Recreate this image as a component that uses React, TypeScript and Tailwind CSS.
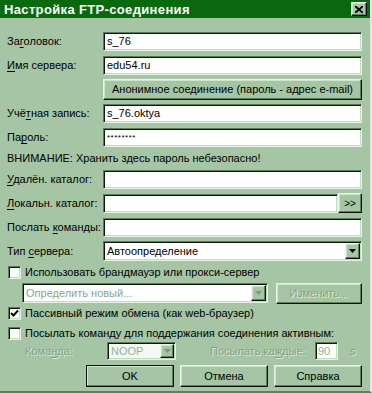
import React from 'react';

const BG = 'bg-[#a5c5a5]';

const Sunken: React.FC<{ className?: string; children?: React.ReactNode }> = ({ className = '', children }) => (
  <div
    className={`border border-t-[#5a7a5a] border-l-[#5a7a5a] border-b-[#e4f2e4] border-r-[#e4f2e4] shadow-[inset_1px_1px_0_#101810,inset_-1px_-1px_0_#c4dcc4] ${className}`}
  >
    {children}
  </div>
);

const Raised: React.FC<{ className?: string; children?: React.ReactNode; dark?: boolean }> = ({ className = '', children, dark }) => (
  <div
    className={`flex items-center justify-center border ${dark ? 'border-[#0c140c]' : 'border-t-[#e8f4e8] border-l-[#e8f4e8] border-b-[#0c140c] border-r-[#0c140c]'} shadow-[inset_-1px_-1px_0_#5f7f5f,inset_1px_1px_0_#cfe4cf] ${BG} ${className}`}
  >
    {children}
  </div>
);

const Arrow: React.FC<{ disabled?: boolean }> = ({ disabled }) => (
  <svg width="7" height="4" viewBox="0 0 7 4">
    <path d="M0 0h7L3.5 4z" fill={disabled ? '#7d987d' : '#000'} />
  </svg>
);

const Label: React.FC<{ pre: string; key1: string; post: string; className?: string }> = ({ pre, key1, post, className = '' }) => (
  <span className={className}>
    {pre}
    <span className="underline underline-offset-2">{key1}</span>
    {post}
  </span>
);

const FieldRow: React.FC<{ label: React.ReactNode; value?: string; className?: string; children?: React.ReactNode }> = ({ label, value, className = '', children }) => (
  <div className={`flex items-center h-[19px] ${className}`}>
    <div className="w-[96px] shrink-0 whitespace-nowrap">{label}</div>
    {children ?? (
      <Sunken className="flex-1 h-full bg-white flex items-center pl-[3px]">
        <span>{value}</span>
      </Sunken>
    )}
  </div>
);

const Check: React.FC<{ checked?: boolean }> = ({ checked }) => (
  <Sunken className="w-[13px] h-[13px] bg-white shrink-0 flex items-center justify-center">
    {checked && (
      <svg width="9" height="9" viewBox="0 0 9 9">
        <path d="M1 4l2.5 2.5L8 1.5" stroke="#000" strokeWidth="2" fill="none" />
      </svg>
    )}
  </Sunken>
);

export default function App() {
  return (
    <div
      className={`w-[372px] h-[393px] ${BG} flex flex-col text-[11px] leading-[13px] text-black border-r-2 border-b-2 border-r-[#dcecdc] border-b-[#5f7f5f] overflow-hidden`}
      style={{ fontFamily: '"Liberation Sans", Arial, sans-serif' }}
    >
      {/* Title bar */}
      <div className="h-[18px] bg-[#0a680f] flex items-center justify-between pl-[4px] pr-[3px] shrink-0">
        <span className="text-white font-bold text-[13px] tracking-[0.35px]">Настройка FTP-соединения</span>
        <Raised className="w-[16px] h-[14px]">
          <svg width="8" height="7" viewBox="0 0 8 7">
            <path d="M0 0l8 7M8 0L0 7" stroke="#000" strokeWidth="1.8" />
          </svg>
        </Raised>
      </div>

      <div className="flex flex-col pl-[7px] pr-[8px]">
        <FieldRow className="mt-[14px]" label={<Label pre="За" key1="г" post="оловок:" />} value="s_76" />
        <FieldRow className="mt-[5px]" label={<Label pre="" key1="И" post="мя сервера:" />} value="edu54.ru" />
        <div className="flex mt-[4px]">
          <div className="w-[96px] shrink-0" />
          <Raised className="flex-1 h-[21px]">Анонимное соединение (пароль - адрес e-mail)</Raised>
        </div>
        <FieldRow className="mt-[4px]" label={<Label pre="Учё" key1="т" post="ная запись:" />} value="s_76.oktya" />
        <FieldRow className="mt-[5px]" label={<Label pre="Па" key1="р" post="оль:" />}>
          <Sunken className="flex-1 h-full bg-white flex items-center pl-[3px]">
            <span className="text-[8px] tracking-[0.5px]">********</span>
          </Sunken>
        </FieldRow>
        <div className="mt-[4px] h-[14px] flex items-center">ВНИМАНИЕ: Хранить здесь пароль небезопасно!</div>
        <FieldRow className="mt-[5px]" label={<Label pre="" key1="У" post="далён. каталог:" />} value="" />
        <FieldRow className="mt-[5px]" label={<Label pre="" key1="Л" post="окальн. каталог:" />}>
          <Sunken className="flex-1 h-full bg-white" />
          <Raised className="w-[24px] h-[20px] -mt-[1px] text-[10px]">&gt;&gt;</Raised>
        </FieldRow>
        <FieldRow className="mt-[5px]" label={<Label pre="Послать " key1="к" post="оманды:" />} value="" />
        <div className="flex items-center h-[20px] mt-[4px]">
          <div className="w-[96px] shrink-0">
            <Label pre="Тип " key1="с" post="ервера:" />
          </div>
          <Sunken className="flex-1 h-full bg-white flex items-center pl-[3px] pr-[1px]">
            <span className="flex-1">Автоопределение</span>
            <Raised className="w-[15px] h-[16px]">
              <Arrow />
            </Raised>
          </Sunken>
        </div>

        <div className="flex items-center h-[15px] mt-[4px] pl-[1px] gap-[4px]">
          <Check />
          <span>Использовать брандмауэр или прокси-сервер</span>
        </div>

        <div className="flex items-center h-[20px] mt-[3px] pl-[15px]">
          <Sunken className="w-[246px] h-full bg-white flex items-center pl-[3px] pr-[1px]">
            <span className="flex-1 text-[#8aa48a]">Определить новый...</span>
            <Raised className="w-[15px] h-[16px]">
              <Arrow disabled />
            </Raised>
          </Sunken>
          <Raised className="ml-[8px] flex-1 h-[21px] text-[#86a286] [text-shadow:1px_1px_0_#e0eee0]">Изменить...</Raised>
        </div>

        <div className="flex items-center h-[15px] mt-[3px] pl-[1px] gap-[4px]">
          <Check checked />
          <span>Пассивный режим обмена (как web-браузер)</span>
        </div>

        <div className="flex items-center h-[15px] mt-[5px] pl-[1px] gap-[4px]">
          <Check />
          <span>Посылать команду для поддержания соединения активным:</span>
        </div>

        <div className="flex items-center h-[18px] mt-[1px] pl-[18px] text-[#86a286] [text-shadow:1px_1px_0_#d8e8d8]">
          <div className="w-[82px] shrink-0">
            <Label pre="Кома" key1="н" post="да:" />
          </div>
          <Sunken className="w-[69px] h-full bg-[#f4f8f4] flex items-center pl-[3px] pr-[1px]">
            <span className="flex-1 [text-shadow:none] text-[#98ae98]">NOOP</span>
            <Raised className="w-[14px] h-[14px]">
              <Arrow disabled />
            </Raised>
          </Sunken>
          <div className="ml-[34px] w-[105px] shrink-0">
            <Label pre="Посылать ка" key1="ж" post="дые:" />
          </div>
          <Sunken className="w-[23px] h-full bg-white flex items-center pl-[2px]">
            <span className="[text-shadow:none] text-[#98ae98]">90</span>
          </Sunken>
          <span className="ml-[12px]">s</span>
        </div>

        <div className="flex items-center h-[22px] mt-[5px] pl-[79px] gap-[6px]">
          <Raised dark className="w-[89px] h-full">OK</Raised>
          <Raised className="w-[89px] h-full">Отмена</Raised>
          <Raised className="w-[89px] h-full">Справка</Raised>
        </div>
      </div>
    </div>
  );
}
